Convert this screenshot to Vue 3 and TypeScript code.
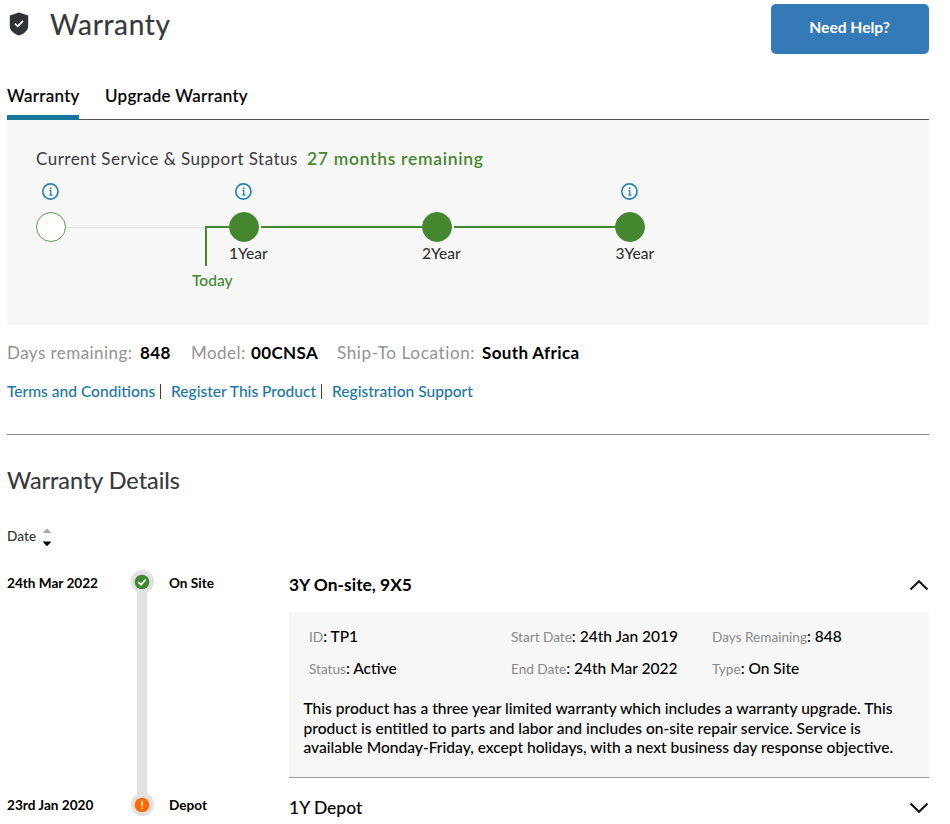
<script setup lang="ts">
interface Step {
  label: string
  info: boolean
  filled: boolean
  line: 'none' | 'grey' | 'green'
  today: boolean
}

const steps: Step[] = [
  { label: '', info: true, filled: false, line: 'grey', today: true },
  { label: '1Year', info: true, filled: true, line: 'green', today: false },
  { label: '2Year', info: false, filled: true, line: 'green', today: false },
  { label: '3Year', info: true, filled: true, line: 'none', today: false },
]

const facts = [
  { key: 'ID', value: 'TP1' },
  { key: 'Start Date', value: '24th Jan 2019' },
  { key: 'Days Remaining', value: '848' },
  { key: 'Status', value: 'Active' },
  { key: 'End Date', value: '24th Mar 2022' },
  { key: 'Type', value: 'On Site' },
]
</script>

<template>
  <main class="page">
    <header class="header">
      <svg class="shield" width="20" height="24" viewBox="0 0 20 24">
        <path d="M10 0.5 L19.2 3.6 V14 C19.2 18.5 15 21.7 10 23.5 C5 21.7 0.8 18.5 0.8 14 V3.6 Z" fill="#2f3236" />
        <path d="M6 11.6 L8.8 14.3 L14 8.9" fill="none" stroke="#fff" stroke-width="1.8" />
      </svg>
      <h1 class="title">Warranty</h1>
      <button class="help">Need Help?</button>
    </header>

    <nav class="tabs">
      <a class="tab active">Warranty</a>
      <a class="tab second">Upgrade Warranty</a>
    </nav>

    <section class="panel">
      <div class="status">
        <span class="status-label">Current Service &amp; Support Status</span>
        <span class="status-value">27 months remaining</span>
      </div>
      <div class="timeline">
        <div v-for="(s, i) in steps" :key="i" class="step">
          <div class="info">
            <svg v-if="s.info" width="18" height="18" viewBox="0 0 18 18">
              <circle cx="9.4" cy="9.5" r="7.6" fill="#fff" stroke="#2a82b0" stroke-width="1.7" />
              <circle cx="9.6" cy="6.3" r="1" fill="#2a82b0" />
              <path d="M8.3 8.7 H9.8 V13.1 M8.1 13.1 H11.5" fill="none" stroke="#2a82b0" stroke-width="1.3" />
            </svg>
          </div>
          <div class="track">
            <span class="dot" :class="{ filled: s.filled }"></span>
            <span v-if="s.line !== 'none'" class="line" :class="s.line"></span>
            <span v-if="s.today" class="today-line"></span>
          </div>
          <div class="step-label">{{ s.label }}</div>
          <span v-if="s.today" class="today-text">Today</span>
        </div>
      </div>
    </section>

    <div class="summary">
      <span class="grey k1">Days remaining:</span><b class="v1">848</b>
      <span class="grey k2">Model:</span><b class="v2">00CNSA</b>
      <span class="grey k3">Ship-To Location:</span><b class="v3">South Africa</b>
    </div>
    <div class="links">
      <a class="l1">Terms and Conditions</a><i class="bar"></i>
      <a class="l2">Register This Product</a><i class="bar"></i>
      <a class="l3">Registration Support</a>
    </div>

    <h2 class="subtitle">Warranty Details</h2>
    <div class="sort">
      <span>Date</span>
      <svg width="10" height="20" viewBox="0 0 10 20">
        <path d="M0.5 6 L5 1.5 L9.5 6 Z" fill="#aaa" />
        <path d="M0.5 14.5 L5 19.3 L9.5 14.5 Z" fill="#000" />
      </svg>
    </div>

    <section class="entries">
      <div class="dates">
        <span class="date">24th Mar 2022</span>
        <span class="date">23rd Jan 2020</span>
      </div>
      <div class="rail">
        <span class="node">
          <svg width="16" height="16" viewBox="0 0 16 16">
            <circle cx="8" cy="8" r="7.3" fill="#3f8a30" />
            <path d="M4.3 8.2 L7 10.7 L11.6 5.7" fill="none" stroke="#fff" stroke-width="1.7" />
          </svg>
        </span>
        <span class="pipe"></span>
        <span class="node">
          <svg width="16" height="16" viewBox="0 0 16 16">
            <circle cx="8" cy="8" r="7.3" fill="#ff6a00" />
            <path d="M8 3.8 V9.2 M8 10.5 V12.1" stroke="#fff" stroke-width="1.5" />
          </svg>
        </span>
      </div>
      <div class="types">
        <span class="date">On Site</span>
        <span class="date">Depot</span>
      </div>
      <div class="detail">
        <div class="row">
          <h3 class="name open">3Y On-site, 9X5</h3>
          <svg width="20" height="12" viewBox="0 0 20 12"><path d="M1.5 10.5 L10 2.2 L18.5 10.5" fill="none" stroke="#111" stroke-width="2" /></svg>
        </div>
        <div class="card">
          <dl class="facts">
            <div v-for="f in facts" :key="f.key" class="fact">
              <dt>{{ f.key }}</dt><dd>: {{ f.value }}</dd>
            </div>
          </dl>
          <p class="desc">
            <span>This product has a three year limited warranty which includes a warranty upgrade. This</span>
            <span>product is entitled to parts and labor and includes on-site repair service. Service is</span>
            <span>available Monday-Friday, except holidays, with a next business day response objective.</span>
          </p>
        </div>
        <div class="row last">
          <h3 class="name">1Y Depot</h3>
          <svg width="20" height="12" viewBox="0 0 20 12"><path d="M1.5 1.5 L10 9.8 L18.5 1.5" fill="none" stroke="#111" stroke-width="2" /></svg>
        </div>
      </div>
    </section>
  </main>
</template>

<style>
body { background: #fff; }
</style>

<style scoped>
* { box-sizing: border-box; }
.page {
  width: 928.6px;
  height: 824px;
  overflow: hidden;
  padding-left: 7px;
  font-family: Lato, "Liberation Sans", sans-serif;
  color: #000;
  white-space: nowrap;
}
h1, h2, h3, p, dl, dd { margin: 0; font-weight: 400; }
.header { display: flex; height: 77px; padding-top: 4px; align-items: flex-start; }
.shield { margin: 8px 0 0 1.5px; }
.title { margin-left: 21.5px; font-size: 28px; line-height: 41px; color: #36383b; letter-spacing: 0.65px; -webkit-text-stroke: 0.2px #36383b; }
.help {
  margin-left: auto;
  width: 158px;
  height: 50px;
  border: 0;
  border-radius: 5px;
  background: #337ab7;
  color: #fff;
  font: 700 15.6px/46px Lato, sans-serif;
  padding: 0 0 4px;
}
.tabs { display: flex; gap: 26px; height: 43px; border-bottom: 1px solid #555; font-size: 17px; font-weight: 500; line-height: 38px; letter-spacing: 0.29px; -webkit-text-stroke: 0.15px #000; }
.tab { height: 42px; }
.tab.active { width: 72px; height: 43px; border-bottom: 5px solid #16799c; }
.panel { height: 205px; background: #f7f7f7; padding: 28px 0 0 29px; }
.status { display: flex; gap: 10px; height: 22px; font-size: 17px; line-height: 22px; }
.status-label { color: #3b3b3f; letter-spacing: 0.48px; width: 261px; }
.status-value { color: #45872f; font-size: 17.5px; font-weight: 600; letter-spacing: 0.7px; }
.timeline { display: grid; grid-template-columns: 193px 193px 193.4px 100px; margin-top: 12px; }
.step { position: relative; }
.info { height: 18px; padding-left: 5px; }
.info svg { display: block; }
.track { position: relative; display: flex; align-items: center; height: 30px; margin-top: 12px; }
.dot { flex: none; width: 30px; height: 30px; border-radius: 50%; border: 1.5px solid #5b9a49; background: #fff; }
.dot.filled { background: #45872f; border-color: #45872f; }
.line { flex: 1; height: 2px; margin-left: 2px; background: #45872f; }
.line.grey { height: 1px; background: #e4e4e4; margin-left: 0; }
.today-line { position: absolute; left: 169px; top: 14px; width: 24px; height: 40px; border-left: 2px solid #45872f; border-top: 2px solid #45872f; }
.step-label { font-size: 15.5px; font-weight: 500; line-height: 23px; color: #333; height: 24px; }
.today-text { position: absolute; left: 156px; top: 86px; font-size: 15.6px; font-weight: 500; line-height: 24px; color: #45872f; }
.summary { display: flex; height: 24px; margin-top: 16px; font-size: 17px; line-height: 24px; letter-spacing: 0.36px; }
.summary b { font-weight: 700; }
.summary .grey { color: #929292; letter-spacing: 0.45px; }
.k1 { width: 133px; } .v1 { width: 51px; }
.k2 { width: 60px; } .v2 { width: 86px; }
.summary .k3 { width: 145px; letter-spacing: 0.65px; }
.links { display: flex; align-items: center; height: 24px; margin-top: 14px; font-size: 15.56px; line-height: 24px; color: #1b76a2; font-weight: 500; }
.l1 { width: 153px; } .l2 { width: 150px; }
.bar { width: 1px; height: 15px; background: #5b3422; margin-right: 10px; }
.subtitle { margin-top: 31px; padding-top: 28px; border-top: 1px solid #8d8d8d; font-size: 23.4px; line-height: 34px; color: #36383b; -webkit-text-stroke: 0.15px #36383b; }
.sort { display: flex; align-items: center; height: 22px; margin-top: 28px; font-size: 13.7px; font-weight: 500; color: #333; }
.sort span { width: 35px; line-height: 20px; }
.sort svg { margin-top: 2px; }
.entries { display: flex; margin-top: 22px; height: 260px; }
.dates, .types { display: flex; flex-direction: column; justify-content: space-between; height: 250px; }
.dates { width: 123.5px; }
.types { width: 120px; margin-left: 15.5px; }
.date { font-size: 13.6px; font-weight: 700; line-height: 28px; }
.rail { width: 23px; height: 250px; display: flex; flex-direction: column; align-items: center; padding: 1px 0 3px; }
.node { flex: none; display: grid; place-items: center; width: 23px; height: 23px; border-radius: 50%; background: #e2e2e2; z-index: 1; }
.pipe { width: 10px; flex: 1; background: #e2e2e2; margin: -2px 0; }
.detail { width: 639.6px; }
.row { display: flex; justify-content: space-between; align-items: center; height: 32px; }
.name { font-size: 17.5px; font-weight: 500; line-height: 32px; }
.name.open { font-weight: 700; font-size: 17.4px; }
.card { height: 166px; margin-top: 11px; background: #f7f7f7; border-bottom: 1px solid #999; padding: 8px 0 0 14.5px; }
.facts { display: grid; grid-template-columns: 202px 201px 200px; padding-left: 5.5px; }
.fact { display: flex; align-items: baseline; height: 32px; line-height: 32px; font-size: 15.5px; }
.fact dt { font-size: 13.6px; font-weight: 400; color: #888; }
.fact dd { font-weight: 500; }
.desc { margin-top: 15px; display: flex; flex-direction: column; font-size: 15.57px; font-weight: 500; line-height: 19.5px; }
.row.last { margin-top: 14px; }
</style>
